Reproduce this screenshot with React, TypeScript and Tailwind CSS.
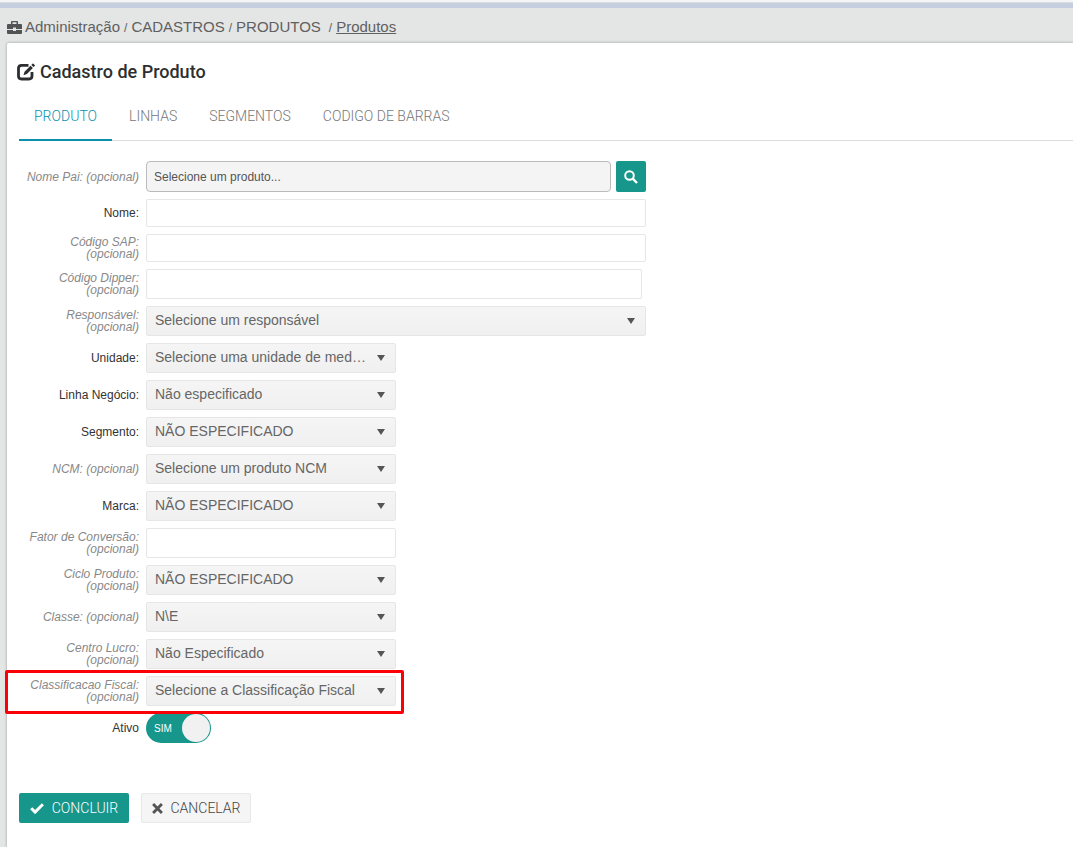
import { useState } from "react";
import type { ReactNode } from "react";
import clsx from "clsx";

type Field = {
  id: string;
  label: string;
  optional?: boolean;
  value?: string;
  kind: "input" | "select";
  size: string;
  highlight?: boolean;
};

// Campos na ordem em que aparecem no formulário, depois do "Nome Pai".
const fields: Field[] = [
  { id: "nome", label: "Nome:", kind: "input", size: "h-7 w-[500px]" },
  { id: "sap", label: "Código SAP:", optional: true, kind: "input", size: "h-7 w-[500px]" },
  { id: "dipper", label: "Código Dipper:", optional: true, kind: "input", size: "h-[30px] w-[496px]" },
  { id: "responsavel", label: "Responsável:", optional: true, value: "Selecione um responsável", kind: "select", size: "w-[500px]" },
  { id: "unidade", label: "Unidade:", value: "Selecione uma unidade de medida", kind: "select", size: "w-[250px]" },
  { id: "linha", label: "Linha Negócio:", value: "Não especificado", kind: "select", size: "w-[250px]" },
  { id: "segmento", label: "Segmento:", value: "NÃO ESPECIFICADO", kind: "select", size: "w-[250px]" },
  { id: "ncm", label: "NCM:", optional: true, value: "Selecione um produto NCM", kind: "select", size: "w-[250px]" },
  { id: "marca", label: "Marca:", value: "NÃO ESPECIFICADO", kind: "select", size: "w-[250px]" },
  { id: "fator", label: "Fator de Conversão:", optional: true, kind: "input", size: "h-[30px] w-[250px]" },
  { id: "ciclo", label: "Ciclo Produto:", optional: true, value: "NÃO ESPECIFICADO", kind: "select", size: "w-[250px]" },
  { id: "classe", label: "Classe:", optional: true, value: "N\\E", kind: "select", size: "w-[250px]" },
  { id: "centro", label: "Centro Lucro:", optional: true, value: "Não Especificado", kind: "select", size: "w-[250px]" },
  { id: "fiscal", label: "Classificacao Fiscal:", optional: true, value: "Selecione a Classificação Fiscal", kind: "select", size: "w-[250px]", highlight: true },
];

const tabs = ["PRODUTO", "LINHAS", "SEGMENTOS", "CODIGO DE BARRAS"];

function BriefcaseIcon() {
  return (
    <svg viewBox="0 0 15 13" className="h-[13px] w-[15px] fill-[#505454]" aria-hidden="true">
      <path d="M4 3V1q0-1 1-1h5q1 0 1 1v2h3q1 0 1 1v4H9V6.500H6V8H0V4q0-1 1-1zm1.500 0h4V1.300h-4zM0 9h6v1h3V9h6v3q0 1-1 1H1q-1 0-1-1z" />
    </svg>
  );
}

function EditIcon() {
  return (
    <svg viewBox="0 0 18 18" className="h-[18px] w-[18px]" aria-hidden="true">
      <path
        d="M11.500 2.300H4.500Q1.500 2.300 1.500 5.300v7.700q0 3 3 3H12q3 0 3-3V9"
        fill="none"
        stroke="#2c2f30"
        strokeWidth="2.800"
      />
      <path d="M6.500 12.300l1-3.600 6-6 2.400 2.400-6 6zM14.300 1.900L15.500.7q.5-.5 1 0l1.200 1.200q.5.500 0 1l-1.200 1.200z" fill="#2c2f30" />
    </svg>
  );
}

function SearchIcon() {
  return (
    <svg viewBox="0 0 14 14" className="h-3.5 w-3.5" fill="none" stroke="white" strokeWidth="2" aria-hidden="true">
      <circle cx="5.500" cy="5.500" r="4.300" />
      <path d="M8.700 8.700l4.300 4.300" strokeWidth="2.400" />
    </svg>
  );
}

function CheckIcon() {
  return (
    <svg viewBox="0 0 14 11" className="h-[11px] w-3.5" fill="none" stroke="white" strokeWidth="3" aria-hidden="true">
      <path d="M1.200 5.200l3.900 3.900 7.800-7.800" />
    </svg>
  );
}

function CloseIcon() {
  return (
    <svg viewBox="0 0 10 10" className="h-[11px] w-[11px]" fill="none" stroke="#555" strokeWidth="2.600" aria-hidden="true">
      <path d="M1 1l8 8M9 1l-8 8" />
    </svg>
  );
}

function Row({ id, label, optional, highlight, children }: Pick<Field, "id" | "label" | "optional" | "highlight"> & { children: ReactNode }) {
  return (
    <div className="relative flex items-center gap-[7px]">
      <label
        htmlFor={id}
        className={clsx("w-[120px] text-right text-xs leading-3", optional ? "text-[#888] italic" : "text-[#333]")}
      >
        {label} {optional && <span className="whitespace-nowrap">(opcional)</span>}
      </label>
      {children}
      {highlight && (
        <div className="pointer-events-none absolute -top-1.5 -bottom-2 -left-3.5 z-10 w-[399px] rounded-xs border-3 border-[#fb0007]" />
      )}
    </div>
  );
}

function Select({ id, value, size }: { id: string; value?: string; size: string }) {
  return (
    <div className={clsx("relative", size)}>
      <select
        id={id}
        className="block h-[30px] w-full appearance-none truncate rounded-xs border border-[#e6e6e6] bg-linear-to-b from-[#f5f5f5] to-[#f0f0f0] pr-7 pb-0.5 pl-2 text-sm text-[#666]"
      >
        <option>{value}</option>
      </select>
      <svg viewBox="0 0 8 6" className="pointer-events-none absolute top-3 right-[11px] h-1.5 w-2 fill-[#555]" aria-hidden="true">
        <path d="M0 0h8L4 6z" />
      </svg>
    </div>
  );
}

export default function App() {
  const [tab, setTab] = useState(tabs[0]);
  const [active, setActive] = useState(true);

  return (
    <div className="flex min-h-screen flex-col overflow-x-hidden bg-[#e4e6e5] font-['Liberation_Sans',Arial,sans-serif]">
      <div className="h-2 border-t-2 border-t-[#f3f5f8] bg-[#c6cfe0]">
        <div className="h-px bg-[#d9dbdd]" />
      </div>

      <nav className="flex h-[35px] items-center pt-1 pl-[7px] text-[15px] text-[#606060]">
        <BriefcaseIcon />
        <a href="#" className="ml-[3px]">Administração</a>
        <span className="mx-1 text-xs">/</span>
        <a href="#">CADASTROS</a>
        <span className="mx-1 text-xs">/</span>
        <a href="#">PRODUTOS</a>
        <span className="mr-1 ml-2 text-xs">/</span>
        <a href="#" className="underline">Produtos</a>
      </nav>

      <main className="ml-[7px] flex-1 rounded-tl-xs bg-white pl-3 shadow-[0_0_3px_rgba(0,0,0,0.35)]">
        <h1 className="-ml-0.5 flex h-[58px] items-center gap-[5px] font-[Roboto,sans-serif] text-lg font-medium text-[#2c2f30]">
          <EditIcon />
          Cadastro de Produto
        </h1>

        <div role="tablist" className="flex h-10 gap-0.5 border-b border-[#dcdcdc] font-[Roboto,sans-serif]">
          {tabs.map((name) => (
            <button
              key={name}
              role="tab"
              aria-selected={name === tab}
              onClick={() => setTab(name)}
              className={clsx(
                "-mb-px border-b-2 px-[15px] pb-2 text-sm font-light",
                name === tab ? "border-[#0b8fae] text-[#0b8fae]" : "border-transparent text-[#777]",
              )}
            >
              {name}
            </button>
          ))}
        </div>

        <form className="pt-5" onSubmit={(e) => e.preventDefault()}>
          <div className="flex flex-col gap-[7px]">
            <Row id="pai" label="Nome Pai:" optional>
              <div className="flex gap-[5px]">
                <input
                  id="pai"
                  readOnly
                  value="Selecione um produto..."
                  className="h-[31px] w-[465px] rounded border border-[#bbb] bg-[#f4f4f4] px-[7px] text-xs text-[#555]"
                />
                <button
                  type="button"
                  aria-label="Buscar produto"
                  className="flex h-[31px] w-[30px] items-center justify-center rounded-xs bg-[#17968c]"
                >
                  <SearchIcon />
                </button>
              </div>
            </Row>

            {fields.map((f) => (
              <Row key={f.id} id={f.id} label={f.label} optional={f.optional} highlight={f.highlight}>
                {f.kind === "select" ? (
                  <Select id={f.id} value={f.value} size={f.size} />
                ) : (
                  <input id={f.id} className={clsx("rounded-xs border border-[#e6e6e6] bg-white px-2 text-sm", f.size)} />
                )}
              </Row>
            ))}

            <Row id="ativo" label="Ativo">
              <div className="relative h-[30px] w-[65px]">
                <input
                  id="ativo"
                  type="checkbox"
                  role="switch"
                  checked={active}
                  onChange={(e) => setActive(e.target.checked)}
                  className="block h-full w-full appearance-none rounded-full bg-[#8a8a8a] checked:bg-[#17968c]"
                />
                <span
                  className={clsx(
                    "pointer-events-none absolute inset-0 flex items-center justify-between p-px text-[10px] text-white",
                    !active && "flex-row-reverse",
                  )}
                >
                  <span className="px-[7px]">{active ? "SIM" : "NÃO"}</span>
                  <span className="h-7 w-7 rounded-full bg-[#f1f1f1]" />
                </span>
              </div>
            </Row>
          </div>

          <div className="mt-[50px] flex gap-3 pb-6 font-[Roboto,sans-serif] text-sm font-light">
            <button
              type="submit"
              className="flex h-[30px] w-[110px] items-center justify-center gap-2 rounded-xs bg-[#17968c] text-white"
            >
              <CheckIcon />
              CONCLUIR
            </button>
            <button
              type="button"
              className="flex h-[30px] w-[110px] items-center justify-center gap-2 rounded-xs border border-[#e8e8e8] bg-[#f5f5f5] text-[#444]"
            >
              <CloseIcon />
              CANCELAR
            </button>
          </div>
        </form>
      </main>
    </div>
  );
}
